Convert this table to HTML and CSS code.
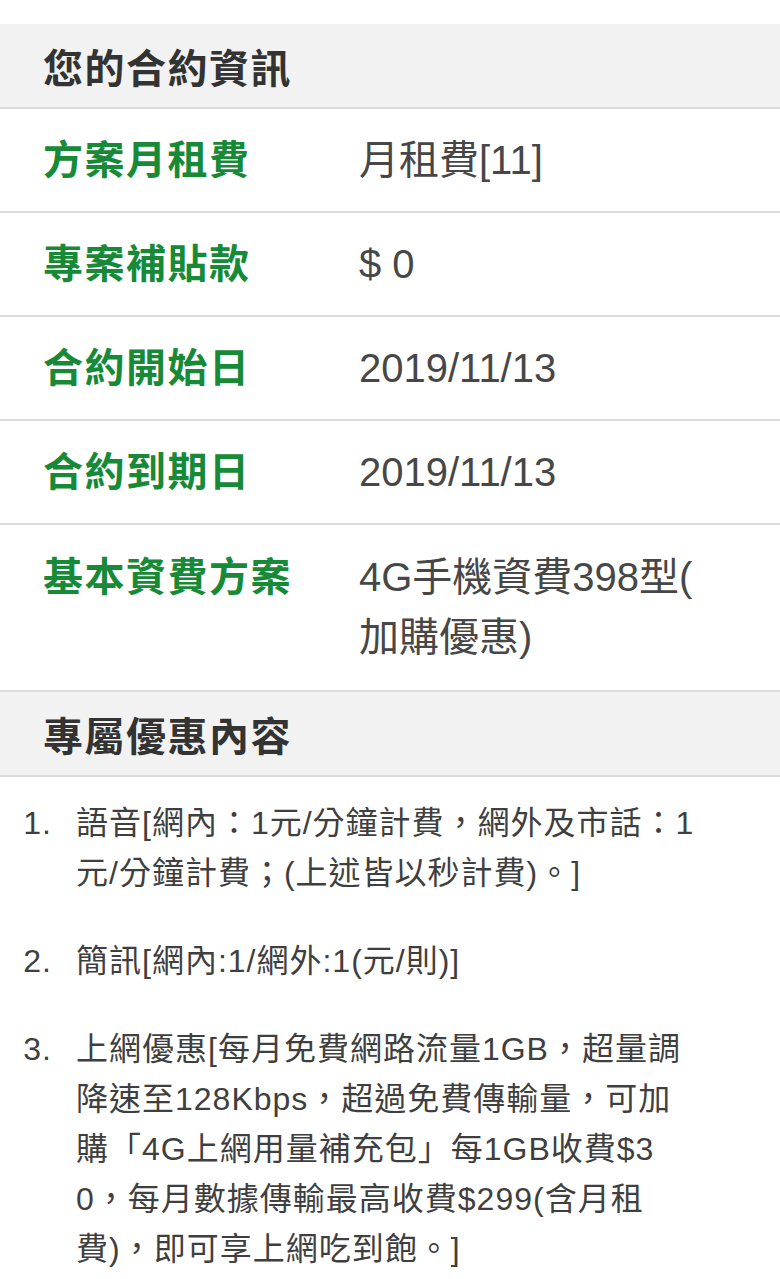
FILE: index.html
```html
<!DOCTYPE html>
<html lang="zh-Hant">
<head>
<meta charset="utf-8">
<title>您的合約資訊</title>
<link rel="stylesheet" href="styles.css">
</head>
<body>
<div class="page">
  <section class="block">
    <h2 class="block-title">您的合約資訊</h2>
    <div class="info-row">
      <div class="info-label">方案月租費</div>
      <div class="info-value">月租費[11]</div>
    </div>
    <div class="info-row">
      <div class="info-label">專案補貼款</div>
      <div class="info-value">$ 0</div>
    </div>
    <div class="info-row">
      <div class="info-label">合約開始日</div>
      <div class="info-value">2019/11/13</div>
    </div>
    <div class="info-row">
      <div class="info-label">合約到期日</div>
      <div class="info-value">2019/11/13</div>
    </div>
    <div class="info-row info-row-tall">
      <div class="info-label">基本資費方案</div>
      <div class="info-value">4G手機資費398型(加購優惠)</div>
    </div>
  </section>
  <section class="block">
    <h2 class="block-title">專屬優惠內容</h2>
    <ol class="offer-list">
      <li class="offer-item"><span class="offer-text">語音[網內：1元/分鐘計費，網外及市話：1元/分鐘計費；(上述皆以秒計費)。]</span></li>
      <li class="offer-item"><span class="offer-text">簡訊[網內:1/網外:1(元/則)]</span></li>
      <li class="offer-item"><span class="offer-text">上網優惠[每月免費網路流量1GB，超量調降速至128Kbps，超過免費傳輸量，可加購「4G上網用量補充包」每1GB收費$30，每月數據傳輸最高收費$299(含月租費)，即可享上網吃到飽。]</span></li>
    </ol>
  </section>
</div>
</body>
</html>
```
FILE: styles.css
```css
html, body {
  margin: 0;
  padding: 0;
  background: #ffffff;
}

body {
  font-family: "Liberation Sans", "Noto Sans CJK TC", sans-serif;
  color: #444444;
}

.page {
  padding-top: 24px;
  width: 780px;
}

.block-title {
  margin: 0;
  height: 83px;
  display: flex;
  align-items: center;
  padding-left: 43px;
  background: #f2f2f2;
  border-bottom: 2px solid #dcdcdc;
  font-size: 40px;
  font-weight: 700;
  color: #333333;
  letter-spacing: 1.5px;
}

.info-row {
  display: grid;
  grid-template-columns: 316px 1fr;
  padding: 21px 60px 21px 43px;
  border-bottom: 2px solid #dcdcdc;
  font-size: 40px;
  line-height: 60px;
}

.info-row-tall {
  padding-top: 22px;
  padding-bottom: 23px;
}

.info-label {
  color: #178a37;
  font-weight: 700;
  letter-spacing: 1.5px;
}

.info-value {
  color: #474747;
  line-break: anywhere;
}

.offer-list {
  list-style: none;
  margin: 0;
  padding: 21px 80px 0 0;
  counter-reset: offer;
  font-size: 32px;
  line-height: 50px;
  color: #3f3f3f;
}

.offer-item {
  counter-increment: offer;
  display: grid;
  grid-template-columns: 52px 1fr;
  column-gap: 24px;
  margin-bottom: 38px;
}

.offer-item::before {
  content: counter(offer) ".";
  text-align: right;
  letter-spacing: 1px;
}

.offer-text {
  letter-spacing: 1px;
  word-break: break-all;
}
```
